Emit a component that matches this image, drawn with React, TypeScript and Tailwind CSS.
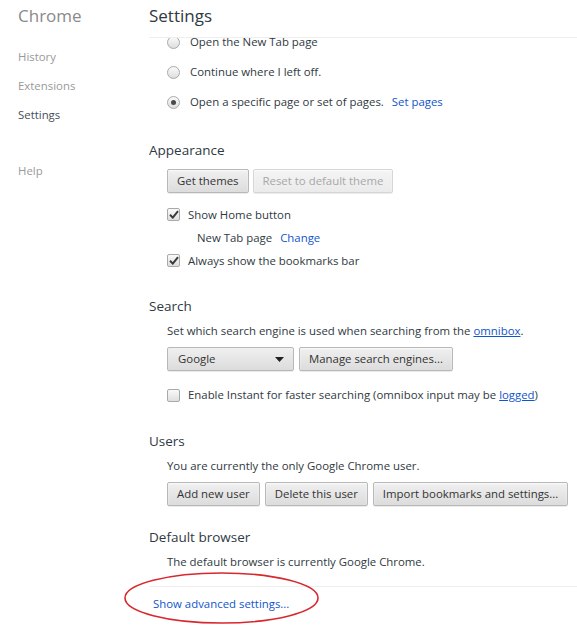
import React from "react";

const FONT = { fontFamily: '"Open Sans", "Noto Sans", Arial, sans-serif' };

function Button({ children, disabled = false }: { children: React.ReactNode; disabled?: boolean }) {
  return (
    <div
      className={
        "flex h-[24px] shrink-0 items-center whitespace-nowrap rounded-[2px] border px-[9px] shadow-[0_1px_0_rgba(0,0,0,0.08),inset_0_1px_2px_rgba(255,255,255,0.75)] " +
        (disabled
          ? "border-[#d6d6d6] bg-gradient-to-b from-[#f4f4f4] to-[#ebebeb] text-[#a8a8a8]"
          : "border-[#b8b8b8] bg-gradient-to-b from-[#f0f0f0] to-[#dcdcdc] text-[#333]")
      }
    >
      {children}
    </div>
  );
}

function Radio({ checked = false }: { checked?: boolean }) {
  return (
    <div className="flex h-[13px] w-[13px] shrink-0 items-center justify-center rounded-full border border-[#a9a9a9] bg-gradient-to-b from-[#fafafa] to-[#dedede]">
      {checked && <div className="h-[5px] w-[5px] rounded-full bg-[#4a4a4a]" />}
    </div>
  );
}

function Checkbox({ checked = false }: { checked?: boolean }) {
  return (
    <div className="flex h-[13px] w-[13px] shrink-0 items-center justify-center rounded-[2px] border border-[#a9a9a9] bg-gradient-to-b from-[#fafafa] to-[#dedede]">
      {checked && (
        <svg width="10" height="9" viewBox="0 0 10 9">
          <path d="M1 4.8 L3.8 7.6 L9 1.2" fill="none" stroke="#3a3a3a" strokeWidth="2" />
        </svg>
      )}
    </div>
  );
}

function Heading({ children, className = "" }: { children: React.ReactNode; className?: string }) {
  return <div className={"h-[20px] text-[13.5px] leading-[20px] text-[#303942] " + className}>{children}</div>;
}

export default function App() {
  return (
    <div style={FONT} className="relative flex h-[629px] w-[577px] overflow-hidden bg-white text-[11.4px] text-[#303942]">
      <aside className="w-[149px] shrink-0 pl-[18px]">
        <div className="pt-[4px] text-[17px] leading-[24px] text-[#8a8a8a]">Chrome</div>
        <nav className="mt-[14px] flex flex-col text-[11.4px] text-[#999]">
          <div className="h-[29px] leading-[29px]">History</div>
          <div className="h-[29px] leading-[29px]">Extensions</div>
          <div className="h-[29px] leading-[29px] text-[#464e5a]">Settings</div>
          <div className="mt-[27px] h-[29px] leading-[29px]">Help</div>
        </nav>
      </aside>

      <main className="flex min-w-0 flex-1 flex-col">
        <header className="h-[38px] shrink-0 border-b border-[#eee] pt-[4px] text-[17px] leading-[24px] text-[#303942]">
          Settings
        </header>

        <div className="flex-1 overflow-hidden">
          <div className="-mt-[11px]">
            <div className="flex h-[30px] items-center gap-[10px] pl-[18px]">
              <Radio />
              <span>Open the New Tab page</span>
            </div>
            <div className="flex h-[30px] items-center gap-[10px] pl-[18px]">
              <Radio />
              <span>Continue where I left off.</span>
            </div>
            <div className="flex h-[30px] items-center gap-[10px] pl-[18px]">
              <Radio checked />
              <span>
                Open a specific page or set of pages.<span className="ml-[8px] text-[#15c]">Set pages</span>
              </span>
            </div>

            <Heading className="mt-[23px]">Appearance</Heading>
            <div className="pl-[18px]">
              <div className="mt-[9px] flex gap-[4px]">
                <Button>Get themes</Button>
                <Button disabled>Reset to default theme</Button>
              </div>
              <div className="mt-[10px] flex h-[23px] items-center gap-[8px]">
                <Checkbox checked />
                <span>Show Home button</span>
              </div>
              <div className="flex h-[23px] items-center pl-[30px]">
                New Tab page<span className="ml-[8px] text-[#15c]">Change</span>
              </div>
              <div className="flex h-[23px] items-center gap-[8px]">
                <Checkbox checked />
                <span>Always show the bookmarks bar</span>
              </div>
            </div>

            <Heading className="mt-[24px]">Search</Heading>
            <div className="pl-[18px]">
              <div className="mt-[6px] h-[18px] leading-[18px]">
                Set which search engine is used when searching from the{" "}
                <span className="text-[#15c] underline">omnibox</span>.
              </div>
              <div className="mt-[7px] flex gap-[5px]">
                <div className="flex h-[24px] w-[127px] items-center justify-between rounded-[2px] border border-[#b8b8b8] bg-gradient-to-b from-[#f0f0f0] to-[#dcdcdc] pl-[10px] pr-[9px] text-[#333] shadow-[0_1px_0_rgba(0,0,0,0.08)]">
                  <span>Google</span>
                  <svg width="9" height="5" viewBox="0 0 9 5">
                    <path d="M0 0 H9 L4.5 5 Z" fill="#222" />
                  </svg>
                </div>
                <Button>Manage search engines...</Button>
              </div>
              <div className="mt-[13px] flex h-[22px] items-center gap-[8px]">
                <Checkbox />
                <span>
                  Enable Instant for faster searching (omnibox input may be{" "}
                  <span className="text-[#15c] underline">logged</span>)
                </span>
              </div>
            </div>

            <Heading className="mt-[25px]">Users</Heading>
            <div className="pl-[18px]">
              <div className="mt-[6px] h-[18px] leading-[18px]">You are currently the only Google Chrome user.</div>
              <div className="mt-[7px] flex gap-[5px]">
                <Button>Add new user</Button>
                <Button>Delete this user</Button>
                <Button>Import bookmarks and settings...</Button>
              </div>
            </div>

            <Heading className="mt-[21px]">Default browser</Heading>
            <div className="pl-[18px]">
              <div className="mt-[6px] h-[18px] leading-[18px]">The default browser is currently Google Chrome.</div>
            </div>

            <div className="mt-[15px] border-t border-[#eee]" />
            <div className="mt-[8px] h-[18px] pl-[4px] leading-[18px] text-[#15c]">Show advanced settings...</div>
          </div>
        </div>
      </main>

      <svg className="pointer-events-none absolute left-[123px] top-[571px]" width="197" height="54" viewBox="0 0 197 54">
        <ellipse cx="98.5" cy="27" rx="96.5" ry="25" fill="none" stroke="#d9272e" strokeWidth="1.6" />
      </svg>
    </div>
  );
}
